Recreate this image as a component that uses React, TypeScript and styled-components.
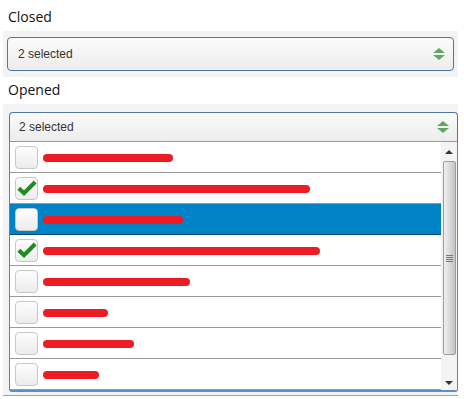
import styled, { createGlobalStyle } from 'styled-components'

const GlobalStyle = createGlobalStyle`
  body {
    margin: 0;
    background: #ffffff;
    font-family: "Liberation Sans", Arial, sans-serif;
  }
`

type Item = { checked: boolean; redact: number; active?: boolean }

const items: Item[] = [
  { checked: false, redact: 130 },
  { checked: true, redact: 267 },
  { checked: false, redact: 140, active: true },
  { checked: true, redact: 277 },
  { checked: false, redact: 147 },
  { checked: false, redact: 65 },
  { checked: false, redact: 91 },
  { checked: false, redact: 56 },
]

const Page = styled.div`
  width: 464px;
  height: 399px;
  overflow: hidden;
  padding-top: 7px;
  box-sizing: border-box;
`

const Label = styled.div`
  font-family: "Open Sans", "Noto Sans", sans-serif;
  font-size: 14px;
  line-height: 19px;
  color: #111;
  padding-left: 8px;
  margin-bottom: 5px;
`

const Band = styled.div<{ $open?: boolean }>`
  margin: 0 6px 0 3px;
  background: #f3f3f3;
  padding: ${(p) => (p.$open ? '8px 0 3px 6px' : '6px 4px 6px 4px')};
  margin-bottom: ${(p) => (p.$open ? '0' : '3px')};
  border-bottom: ${(p) => (p.$open ? '1px solid #a0a0a0' : 'none')};
`

const SelectBox = styled.div<{ $open?: boolean }>`
  display: flex;
  align-items: center;
  justify-content: space-between;
  height: ${(p) => (p.$open ? '28px' : '32px')};
  padding: 0 7px 0 ${(p) => (p.$open ? '9px' : '10px')};
  border: 1px solid #4f76a3;
  border-radius: ${(p) => (p.$open ? '4px 4px 0 0' : '4px')};
  border-bottom-color: ${(p) => (p.$open ? '#9a9a9a' : '#4f76a3')};
  background: linear-gradient(#fbfbfb, #ececec);
  font-size: 12px;
  color: #333;
`

const Arrows = styled.div`
  display: flex;
  flex-direction: column;
  gap: 2px;
  margin-right: 1px;
`

const Tri = styled.div<{ $down?: boolean }>`
  width: 0;
  height: 0;
  border-left: 6px solid transparent;
  border-right: 6px solid transparent;
  ${(p) => (p.$down ? 'border-top: 5px solid #62a862;' : 'border-bottom: 5px solid #62a862;')}
`

const DropList = styled.div`
  display: flex;
  border-left: 1px solid #5b82b3;
  border-right: 1px solid #5b82b3;
  border-bottom: 2px solid #5b8fcc;
  border-radius: 0 0 3px 3px;
  background: #fff;
`

const Rows = styled.div`
  flex: 1;
`

const Row = styled.div<{ $active?: boolean }>`
  display: flex;
  align-items: center;
  gap: 5px;
  height: 30px;
  padding-left: 5px;
  border-bottom: 1px solid ${(p) => (p.$active ? '#04467a' : '#9a9a9a')};
  background: ${(p) => (p.$active ? '#0082c6' : '#fff')};
`

const Check = styled.div`
  width: 21px;
  height: 21px;
  border: 1px solid #c8c8c8;
  border-radius: 4px;
  background: linear-gradient(#fdfdfd, #ececec);
  display: flex;
  align-items: center;
  justify-content: center;
  flex-shrink: 0;
`

const Redact = styled.span`
  display: block;
  height: 8px;
  background: #ed1c24;
  border-radius: 4px;
  margin-top: 1px;
`

const ScrollBar = styled.div`
  width: 16px;
  background: #f4f4f4;
  display: flex;
  flex-direction: column;
  align-items: center;
`

const ScrollArrow = styled.div<{ $down?: boolean }>`
  width: 0;
  height: 0;
  margin: ${(p) => (p.$down ? 'auto 0 5px 0' : '8px 0 5px 0')};
  border-left: 4px solid transparent;
  border-right: 4px solid transparent;
  ${(p) => (p.$down ? 'border-top: 4px solid #333;' : 'border-bottom: 4px solid #333;')}
`

const Thumb = styled.div`
  width: 13px;
  height: 194px;
  margin-top: 2px;
  box-sizing: border-box;
  border: 1px solid #9c9c9c;
  border-radius: 2px;
  background: linear-gradient(to right, #f0f0f0, #d6d6d6 60%, #c4c4c4);
  display: flex;
  align-items: center;
  justify-content: center;
`

const Grip = styled.div`
  width: 7px;
  height: 7px;
  background: repeating-linear-gradient(#777 0 1px, transparent 1px 2px);
`

const CheckMark = () => (
  <svg width="20" height="16" viewBox="0 0 20 16">
    <path d="M1.8 8.2 L7 13.2 L18.2 2" fill="none" stroke="#218a22" strokeWidth="4" strokeLinejoin="miter" />
  </svg>
)

const UpDown = () => (
  <Arrows>
    <Tri />
    <Tri $down />
  </Arrows>
)

export default function App() {
  return (
    <Page>
      <GlobalStyle />
      <Label>Closed</Label>
      <Band>
        <SelectBox>
          2 selected
          <UpDown />
        </SelectBox>
      </Band>
      <Label>Opened</Label>
      <Band $open>
        <SelectBox $open>
          2 selected
          <UpDown />
        </SelectBox>
        <DropList>
          <Rows>
            {items.map((it, i) => (
              <Row key={i} $active={it.active}>
                <Check>{it.checked && <CheckMark />}</Check>
                <Redact style={{ width: it.redact }} />
              </Row>
            ))}
          </Rows>
          <ScrollBar>
            <ScrollArrow />
            <Thumb>
              <Grip />
            </Thumb>
            <ScrollArrow $down />
          </ScrollBar>
        </DropList>
      </Band>
    </Page>
  )
}
